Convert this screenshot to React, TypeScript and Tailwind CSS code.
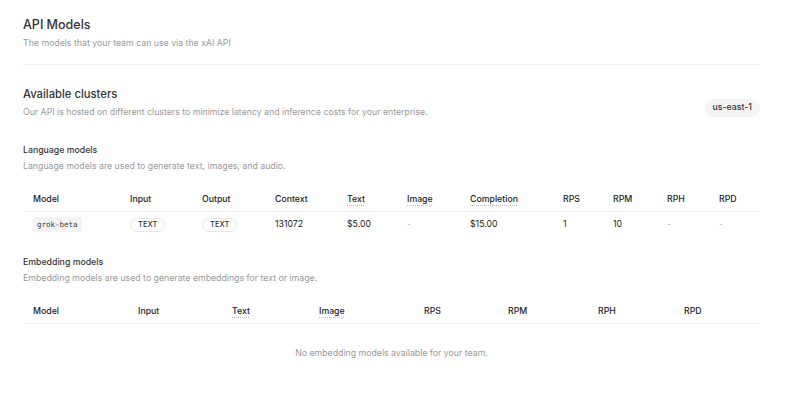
const langCols = [
  { label: 'Model', w: 'w-[97px]' },
  { label: 'Input', w: 'w-[72px]' },
  { label: 'Output', w: 'w-[73px]' },
  { label: 'Context', w: 'w-[72px]' },
  { label: 'Text', w: 'w-[60px]', dotted: true },
  { label: 'Image', w: 'w-[63px]', dotted: true },
  { label: 'Completion', w: 'w-[93px]', dotted: true },
  { label: 'RPS', w: 'w-[50px]' },
  { label: 'RPM', w: 'w-[54px]' },
  { label: 'RPH', w: 'w-[52px]' },
  { label: 'RPD', w: 'w-[51px]' },
]

const embedCols = [
  { label: 'Model', w: 'w-[105px]' },
  { label: 'Input', w: 'w-[94px]' },
  { label: 'Text', w: 'w-[87px]', dotted: true },
  { label: 'Image', w: 'w-[105px]', dotted: true },
  { label: 'RPS', w: 'w-[84px]' },
  { label: 'RPM', w: 'w-[90px]' },
  { label: 'RPH', w: 'w-[86px]' },
  { label: 'RPD', w: 'w-[86px]' },
]

type Col = { label: string; w: string; dotted?: boolean }

function HeaderRow({ cols }: { cols: Col[] }) {
  return (
    <div className="flex h-[24px] items-center border-b border-[#f0f0f0]">
      {cols.map((c) => (
        <div key={c.label} className={`${c.w} shrink-0 pl-[10px] text-[8.75px] font-medium text-[#222]`}>
          <span
            className={
              c.dotted
                ? 'underline decoration-dotted decoration-[#bbb] underline-offset-[3px]'
                : ''
            }
          >
            {c.label}
          </span>
        </div>
      ))}
    </div>
  )
}

function Chip({ children }: { children: string }) {
  return (
    <span className="inline-flex h-[14px] items-center rounded-full border border-[#e6e6e6] px-[7px] text-[7.5px] font-medium text-[#333]">
      {children}
    </span>
  )
}

function Cell({ w, children, muted }: { w: string; children: React.ReactNode; muted?: boolean }) {
  return (
    <div className={`${w} shrink-0 pl-[10px] text-[8.75px] ${muted ? 'text-[#bbb]' : 'text-[#222]'}`}>
      {children}
    </div>
  )
}

export default function App() {
  const w = langCols.map((c) => c.w)
  return (
    <div className="min-h-[397px] w-[800px] bg-white font-['Inter',sans-serif]">
      <div className="w-[737px] pl-[23px] pt-[17px] box-content">
        <h1 className="text-[12.5px] font-medium leading-[16px] text-[#333]">API Models</h1>
        <p className="mt-[4px] text-[8.75px] leading-[12px] text-[#999]">
          The models that your team can use via the xAI API
        </p>
        <div className="mt-[15px] border-t border-[#f0f0f0]" />

        <div className="mt-[22px] flex items-end justify-between">
          <div>
            <h2 className="text-[11.25px] font-medium leading-[14px] text-[#333]">Available clusters</h2>
            <p className="mt-[5px] text-[8.75px] leading-[12px] text-[#999]">
              Our API is hosted on different clusters to minimize latency and inference costs for your enterprise.
            </p>
          </div>
          <span className="mb-[1px] inline-flex h-[18px] items-center rounded-full bg-[#f4f4f4] px-[8px] text-[8.75px] font-medium text-[#333]">
            us-east-1
          </span>
        </div>

        <h3 className="mt-[26px] text-[8.75px] font-medium leading-[12px] text-[#333]">Language models</h3>
        <p className="mt-[4px] text-[8.75px] leading-[12px] text-[#999]">
          Language models are used to generate text, images, and audio.
        </p>

        <div className="mt-[16px]">
          <HeaderRow cols={langCols} />
          <div className="flex h-[25px] items-center">
            <Cell w={w[0]}>
              <span className="inline-flex h-[15px] items-center rounded-[2px] bg-[#f3f3f3] px-[4px] font-['DejaVu_Sans_Mono',monospace] text-[7.5px] text-[#444]">
                grok-beta
              </span>
            </Cell>
            <Cell w={w[1]}>
              <Chip>TEXT</Chip>
            </Cell>
            <Cell w={w[2]}>
              <Chip>TEXT</Chip>
            </Cell>
            <Cell w={w[3]}>131072</Cell>
            <Cell w={w[4]}>$5.00</Cell>
            <Cell w={w[5]} muted>-</Cell>
            <Cell w={w[6]}>$15.00</Cell>
            <Cell w={w[7]}>1</Cell>
            <Cell w={w[8]}>10</Cell>
            <Cell w={w[9]} muted>-</Cell>
            <Cell w={w[10]} muted>-</Cell>
          </div>
        </div>

        <h3 className="mt-[19px] text-[8.75px] font-medium leading-[12px] text-[#333]">Embedding models</h3>
        <p className="mt-[4px] text-[8.75px] leading-[12px] text-[#999]">
          Embedding models are used to generate embeddings for text or image.
        </p>

        <div className="mt-[16px]">
          <HeaderRow cols={embedCols} />
          <p className="pt-[23px] text-center text-[8.75px] leading-[12px] text-[#999]">
            No embedding models available for your team.
          </p>
        </div>
      </div>
    </div>
  )
}
